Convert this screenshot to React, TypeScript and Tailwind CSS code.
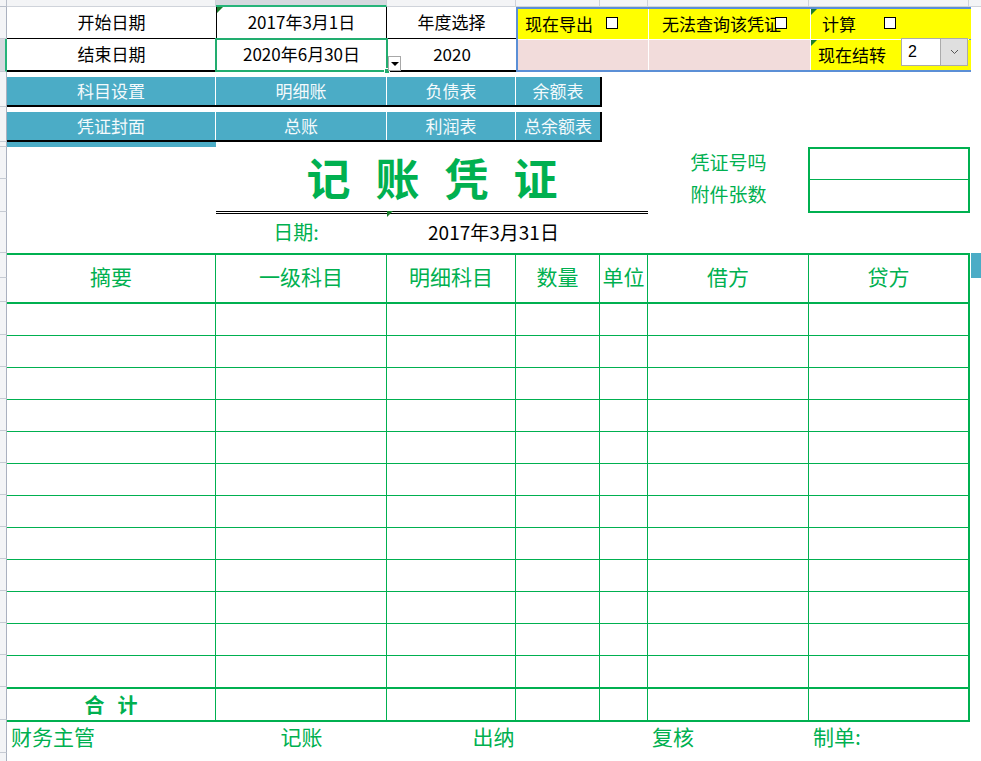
import React from 'react';

// row header heights of the sheet (left gutter), top to bottom
const gutterRows = [
  'h-[32px]', 'h-[33px]', 'h-[35px]', 'h-[35px]', 'h-[5px]', 'h-[32px]', 'h-[33px]', 'h-[41px]',
  'h-[25px]', 'h-[24px]', 'h-[33px]',
  'h-[32px]', 'h-[32px]', 'h-[32px]', 'h-[32px]', 'h-[32px]', 'h-[32px]', 'h-[32px]', 'h-[32px]',
  'h-[32px]', 'h-[32px]', 'h-[32px]', 'h-[33px]', 'h-[33px]', 'h-[40px]',
];

const headers = ['摘要', '一级科目', '明细科目', '数量', '单位', '借方', '贷方'];

const cols = 'grid grid-cols-[209px_171px_129px_84px_48px_161px_159px]';

const Tri: React.FC<{ className?: string }> = ({ className = 'left-0 top-0' }) => (
  <span className={`absolute h-0 w-0 border-t-[6px] border-r-[6px] border-t-[#1c7c2c] border-r-transparent ${className}`} />
);

const CheckBox: React.FC<{ className?: string }> = ({ className = '' }) => (
  <span className={`inline-block h-[12px] w-[12px] border border-black bg-white ${className}`} />
);

const TopStrip = () => (
  <div className="flex h-[7px] bg-[#f3f4f6]">
    <div className="w-[7px] border-r border-b border-[#b9bfca]" />
    <div className="w-[209px] border-r border-b border-[#cfd3da]" />
    <div className="w-[171px] border-r border-[#cfd3da] border-b-2 border-b-[#26b47a] bg-[#d6d9df]" />
    <div className="w-[129px] border-r border-b border-[#cfd3da]" />
    <div className="w-[84px] border-r border-b border-[#cfd3da]" />
    <div className="w-[48px] border-r border-b border-[#cfd3da]" />
    <div className="w-[161px] border-r border-b border-[#cfd3da]" />
    <div className="w-[160px] border-r border-b border-[#cfd3da]" />
    <div className="flex-1 border-b border-[#cfd3da]" />
  </div>
);

const Gutter = () => (
  <div className="flex w-[7px] flex-col bg-[#f3f4f6]">
    {gutterRows.map((h, i) => (
      <div
        key={i}
        className={
          i === 1
            ? `${h} border-b border-b-[#c6cbd3] border-r-2 border-r-[#26b47a] bg-[#d6d9df]`
            : `${h} border-b border-b-[#c6cbd3] border-r border-r-[#aab1bf]`
        }
      />
    ))}
  </div>
);

const TopRows = () => (
  <div className="flex text-[17px] text-black">
    <div className="w-[509px]">
      <div className="flex h-[32px]">
        <div className="flex w-[209px] items-center justify-center border-b border-black pb-[2px]">开始日期</div>
        <div className="relative flex w-[171px] items-center justify-center border-x border-b border-black pb-[2px]">
          <Tri />
          2017年3月1日
        </div>
        <div className="flex w-[129px] items-center justify-center border-b border-black pb-[2px]">年度选择</div>
      </div>
      <div className="flex h-[33px] border-b-2 border-black">
        <div className="flex w-[209px] items-center justify-center pb-[2px]">结束日期</div>
        <div className="relative flex w-[171px] items-center justify-center pb-[2px]">
          2020年6月30日
          <span className="absolute -left-px -top-px -bottom-[2px] -right-px border-2 border-[#22ad6f]" />
          <span className="absolute -bottom-[4px] -right-[3px] z-10 h-[6px] w-[6px] border border-white bg-[#22ad6f]" />
          <span className="absolute left-[172px] top-[17px] z-10 flex h-[15px] w-[13px] items-center justify-center border border-[#a8a8a8] bg-white">
            <span className="h-0 w-0 border-x-[4px] border-t-[4px] border-x-transparent border-t-black" />
          </span>
        </div>
        <div className="flex w-[129px] items-center justify-center border-l border-black pb-[2px]">2020</div>
      </div>
    </div>
    <div className="grid h-[65px] w-[455px] grid-cols-[130px_161px_160px] grid-rows-[30px_30px] gap-px border-2 border-[#5b8fd6] bg-white">
      <div className="flex items-center bg-[#ffff00] pb-[2px] pl-[7px]">
        现在导出
        <CheckBox className="ml-[13px]" />
      </div>
      <div className="relative flex items-center overflow-hidden whitespace-nowrap bg-[#ffff00] pb-[2px] pl-[13px]">
        无法查询该凭证
        <CheckBox className="absolute left-[126px] top-[8px]" />
      </div>
      <div className="relative flex items-center bg-[#ffff00] pb-[2px] pl-[11px]">
        <Tri />
        计算
        <CheckBox className="ml-[28px]" />
      </div>
      <div className="bg-[#f2dcdb]" />
      <div className="bg-[#f2dcdb]" />
      <div className="relative flex items-center bg-[#ffff00] pb-[2px] pl-[7px]">
        <Tri />
        现在结转
        <div className="-mt-[4px] ml-[15px] flex h-[28px] w-[67px] border border-[#ababab] bg-white">
          <div className="flex flex-1 items-center pl-[6px] font-['Liberation_Sans',sans-serif] text-[16px]">2</div>
          <div className="flex w-[27px] items-center justify-center border-l border-[#ababab] bg-[#dfdfdf]">
            <svg width="9" height="6" viewBox="0 0 9 6">
              <polyline points="1,1 4.5,4.5 8,1" fill="none" stroke="#555" strokeWidth="1" />
            </svg>
          </div>
        </div>
      </div>
    </div>
  </div>
);

const btn = 'flex items-center justify-center bg-[#4bacc6] pb-[2px] text-[17px] text-[#f4fafc]';

const ButtonRow: React.FC<{ labels: string[] }> = ({ labels }) => (
  <div className="pt-[5px]">
    <div className="flex h-[30px] w-[595px] border-b-2 border-black">
      <div className={`${btn} w-[209px] border-r border-white`}>{labels[0]}</div>
      <div className={`${btn} w-[171px] border-r border-white`}>{labels[1]}</div>
      <div className={`${btn} w-[129px] border-r border-white`}>{labels[2]}</div>
      <div className={`${btn} w-[86px] border-r-2 border-black`}>{labels[3]}</div>
    </div>
  </div>
);

const TitleSection = () => (
  <div className="text-[#00b050]">
    <div className="flex h-[67px]">
      <div className="w-[209px]" />
      <div className="flex h-[67px] w-[432px] items-center justify-center gap-[25px] border-b-[3px] border-double border-black pb-[4px] text-[44px] font-bold">
        <span>记</span>
        <span>账</span>
        <span>凭</span>
        <span>证</span>
      </div>
      <div className="flex w-[161px] flex-col text-[19px]">
        <div className="flex h-[32px] items-center justify-center pb-[4px]">凭证号吗</div>
        <div className="flex h-[32px] items-center justify-center pb-[4px]">附件张数</div>
      </div>
      <div className="-ml-px h-[66px] w-[162px] border-2 border-[#00b050]">
        <div className="h-[31px] border-b border-[#00b050]" />
      </div>
    </div>
    <div className="flex h-[39px]">
      <div className="w-[209px]" />
      <div className="flex w-[171px] items-center justify-center pb-[4px] pr-[11px] text-[20px]">日期:</div>
      <div className="relative flex w-[213px] items-center justify-center pb-[4px] text-[19px] text-black">
        <Tri className="left-0 -top-[3px]" />
        2017年3月31日
      </div>
    </div>
  </div>
);

const Row: React.FC<{ last?: boolean }> = ({ last }) => (
  <div className={last ? `${cols} h-[33px] border-b-2 border-[#00b050]` : `${cols} h-[32px] border-b border-[#00b050]`}>
    {headers.map((h, i) => (
      <div key={h} className={i < 6 ? 'border-r border-[#00b050]' : ''} />
    ))}
  </div>
);

const VoucherTable = () => (
  <div className="flex">
    <div className="w-[963px] border-y-2 border-r-2 border-[#00b050] text-[#00b050]">
      <div className={`${cols} h-[49px] border-b-2 border-[#00b050]`}>
        {headers.map((h, i) => (
          <div
            key={h}
            className={`flex items-center justify-center pb-[4px] text-[21px] ${i < 6 ? 'border-r border-[#00b050]' : ''}`}
          >
            {h}
          </div>
        ))}
      </div>
      {Array.from({ length: 12 }).map((_, i) => (
        <Row key={i} last={i === 11} />
      ))}
      <div className={`${cols} h-[31px]`}>
        {headers.map((h, i) => (
          <div
            key={h}
            className={`flex items-center justify-center gap-[13px] text-[20px] font-bold ${i < 6 ? 'border-r border-[#00b050]' : ''}`}
          >
            {i === 0 && (
              <>
                <span>合</span>
                <span>计</span>
              </>
            )}
          </div>
        ))}
      </div>
    </div>
    <div className="ml-px h-[25px] w-[10px] bg-[#4bacc6]" />
  </div>
);

const Footer = () => (
  <div className={`${cols} h-[32px] items-center pb-[4px] text-[21px] text-[#00b050]`}>
    <div className="pl-[4px]">财务主管</div>
    <div className="text-center">记账</div>
    <div className="col-span-2 text-center">出纳</div>
    <div />
    <div className="pl-[4px]">复核</div>
    <div className="pl-[4px]">制单:</div>
  </div>
);

export default function App() {
  return (
    <div className="h-[761px] w-[981px] overflow-hidden bg-white font-['Noto_Sans_CJK_SC',sans-serif] leading-none">
      <TopStrip />
      <div className="flex">
        <Gutter />
        <div className="w-[974px]">
          <TopRows />
          <ButtonRow labels={['科目设置', '明细账', '负债表', '余额表']} />
          <ButtonRow labels={['凭证封面', '总账', '利润表', '总余额表']} />
          <div className="h-[5px] w-[209px] bg-[#4bacc6]" />
          <TitleSection />
          <VoucherTable />
          <Footer />
        </div>
      </div>
    </div>
  );
}
